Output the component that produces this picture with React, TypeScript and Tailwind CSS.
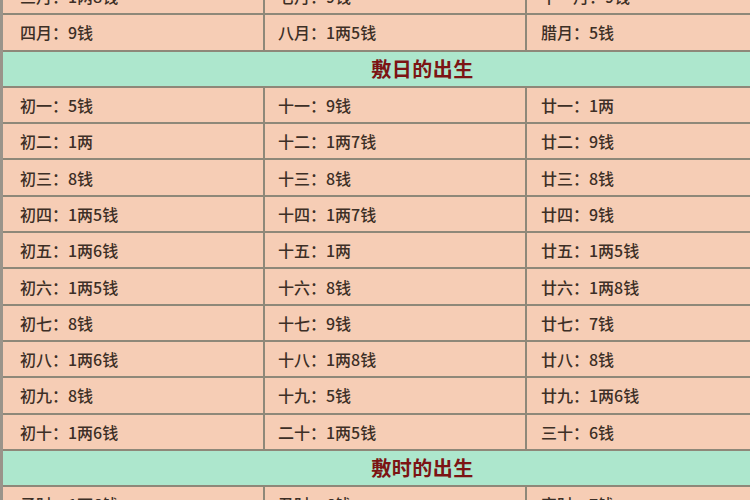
const monthRows = [
  ['三月：1两8钱', '七月：9钱', '十一月：9钱'],
  ['四月：9钱', '八月：1两5钱', '腊月：5钱'],
]

const dayRows = [
  ['初一：5钱', '十一：9钱', '廿一：1两'],
  ['初二：1两', '十二：1两7钱', '廿二：9钱'],
  ['初三：8钱', '十三：8钱', '廿三：8钱'],
  ['初四：1两5钱', '十四：1两7钱', '廿四：9钱'],
  ['初五：1两6钱', '十五：1两', '廿五：1两5钱'],
  ['初六：1两5钱', '十六：8钱', '廿六：1两8钱'],
  ['初七：8钱', '十七：9钱', '廿七：7钱'],
  ['初八：1两6钱', '十八：1两8钱', '廿八：8钱'],
  ['初九：8钱', '十九：5钱', '廿九：1两6钱'],
  ['初十：1两6钱', '二十：1两5钱', '三十：6钱'],
]

const hourRows = [['子时：1两6钱', '丑时：6钱', '寅时：7钱']]

function Row({ cells }: { cells: string[] }) {
  return (
    <div className="grid grid-cols-[262px_262px_1fr] h-[36.3px] shrink-0 border-b-2 border-[#8e8879] bg-[#f6cdb5]">
      {cells.map((c, i) => (
        <div
          key={i}
          className={
            'flex items-center text-[16px] font-medium text-[#3d2f26] ' +
            (i === 0 ? 'pl-[17px] border-r-2 border-[#8e8879]' : i === 1 ? 'pl-[13px] border-r-2 border-[#8e8879]' : 'pl-[14px]')
          }
        >
          {c}
        </div>
      ))}
    </div>
  )
}

function Header({ title }: { title: string }) {
  return (
    <div className="flex items-center justify-center pl-[92px] h-[36.3px] shrink-0 border-b-2 border-[#8e8879] bg-[#ade7cd]">
      <span className="text-[20px] font-bold text-[#7c1414] tracking-[0.5px]">{title}</span>
    </div>
  )
}

export default function App() {
  return (
    <div
      className="w-[750px] h-[500px] overflow-hidden bg-[#f6cdb5] border-l-[3px] border-[#9a948a]"
      style={{ fontFamily: '"Noto Sans CJK SC", "Noto Sans", sans-serif' }}
    >
      <div className="flex flex-col -mt-[21px]">
        {monthRows.map((r, i) => (
          <Row key={'m' + i} cells={r} />
        ))}
        <Header title="敷日的出生" />
        {dayRows.map((r, i) => (
          <Row key={'d' + i} cells={r} />
        ))}
        <Header title="敷时的出生" />
        {hourRows.map((r, i) => (
          <Row key={'h' + i} cells={r} />
        ))}
      </div>
    </div>
  )
}
